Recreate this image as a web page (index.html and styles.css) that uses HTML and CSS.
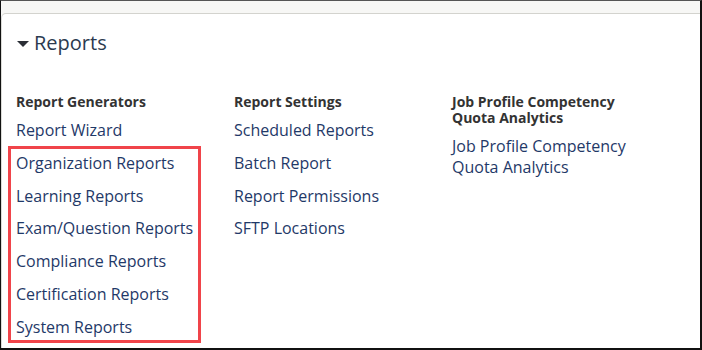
FILE: index.html
```html
<!DOCTYPE html>
<html lang="en">
<head>
    <meta charset="UTF-8">
    <meta name="viewport" content="width=device-width, initial-scale=1.0">
    <title>Reports</title>
    <link rel="stylesheet" href="styles.css">
</head>
<body>
    <div class="frame">
        <div class="top-bar"></div>
        <div class="panel">
            <h1 class="panel-title"><span class="caret"></span>Reports</h1>

            <div class="columns">
                <div class="column">
                    <h3>Report Generators</h3>
                    <a href="#" class="link">Report Wizard</a>
                    <div class="highlight">
                        <a href="#" class="link">Organization Reports</a>
                        <a href="#" class="link">Learning Reports</a>
                        <a href="#" class="link">Exam/Question Reports</a>
                        <a href="#" class="link">Compliance Reports</a>
                        <a href="#" class="link">Certification Reports</a>
                        <a href="#" class="link">System Reports</a>
                    </div>
                </div>

                <div class="column">
                    <h3>Report Settings</h3>
                    <a href="#" class="link">Scheduled Reports</a>
                    <a href="#" class="link">Batch Report</a>
                    <a href="#" class="link">Report Permissions</a>
                    <a href="#" class="link">SFTP Locations</a>
                </div>

                <div class="column narrow">
                    <h3>Job Profile Competency Quota Analytics</h3>
                    <a href="#" class="link">Job Profile Competency Quota Analytics</a>
                </div>
            </div>
        </div>
    </div>
</body>
</html>
```

FILE: styles.css
```css
* {
    margin: 0;
    padding: 0;
    box-sizing: border-box;
    font-family: 'Open Sans', 'Noto Sans', sans-serif;
}

body {
    background: white;
    width: 702px;
    height: 350px;
    overflow: hidden;
}

.frame {
    height: 350px;
    border-top: 1px solid #555;
    border-left: 1px solid #111;
    border-right: 2px solid #111;
    border-bottom: 2px solid #111;
    background: #f7f7f5;
    display: flex;
    flex-direction: column;
}

.top-bar {
    height: 12px;
    flex-shrink: 0;
}

.panel {
    flex: 1;
    background: white;
    border-top: 1px solid #d3d3ce;
    border-left: 1px solid #dcdcd8;
    border-top-left-radius: 5px;
    padding: 15px 14px 0;
}

.panel-title {
    display: flex;
    align-items: center;
    font-size: 20px;
    font-weight: 400;
    line-height: 28px;
    color: #2b3a4f;
    margin-bottom: 37px;
}

.caret {
    width: 0;
    height: 0;
    border-left: 6px solid transparent;
    border-right: 6px solid transparent;
    border-top: 6px solid #2b2f36;
    margin: 2px 5px 0 1px;
}

.columns {
    display: grid;
    grid-template-columns: 218px 218px 200px;
}

.column h3 {
    font-size: 14px;
    font-weight: 700;
    line-height: 16px;
    color: #333;
    margin-bottom: 4px;
}

.link {
    display: block;
    font-size: 16px;
    line-height: 20.8px;
    padding: 6px 0;
    color: #1f3968;
    text-decoration: none;
}

.highlight {
    margin-left: -8px;
    margin-top: -1px;
    padding-top: 1px;
    padding-left: 8px;
    width: 193px;
    outline: 3px solid #f0444a;
    outline-offset: -3px;
}

.highlight .link:last-child {
    padding-bottom: 5px;
}
```
